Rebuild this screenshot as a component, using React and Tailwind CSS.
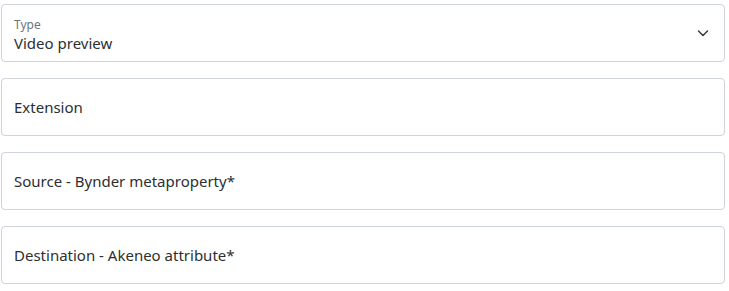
import React from "react";

const font = { fontFamily: '"Noto Sans", "Open Sans", sans-serif' };

function Field({ label }) {
  return (
    <div className="h-[58px] rounded-[4px] border border-[#ced4da] bg-white flex items-center px-[12px] text-[15px] text-[#2b2f33]">
      {label}
    </div>
  );
}

export default function App() {
  return (
    <div className="w-[729px] h-[291px] bg-white pl-px pr-[4px] pt-[4px] flex flex-col gap-[16px]" style={font}>
      <div className="h-[58px] rounded-[4px] border border-[#ced4da] bg-white flex items-center justify-between pl-[12px] pr-[13px]">
        <div className="flex flex-col mt-[3px]">
          <span className="text-[12px] leading-[16px] text-[#6c757d]">Type</span>
          <span className="text-[15px] leading-[20px] text-[#2b2f33]">Video preview</span>
        </div>
        <svg width="16" height="16" viewBox="0 0 16 16" fill="none" stroke="#343a40" strokeWidth="1.5" strokeLinecap="round" strokeLinejoin="round">
          <path d="M3.5 6l4.5 4.5L12.5 6" />
        </svg>
      </div>
      <Field label="Extension" />
      <Field label="Source - Bynder metaproperty*" />
      <Field label="Destination - Akeneo attribute*" />
    </div>
  );
}
